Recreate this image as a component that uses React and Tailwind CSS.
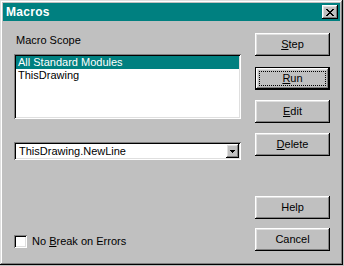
const raised =
  'shadow-[inset_-1px_-1px_0_#000,inset_1px_1px_0_#fff,inset_-2px_-2px_0_#808080,inset_2px_2px_0_#dfdfdf]';
const sunken =
  'shadow-[inset_1px_1px_0_#808080,inset_-1px_-1px_0_#fff,inset_2px_2px_0_#000,inset_-2px_-2px_0_#dfdfdf]';

function Btn({ children, isDefault, className = '' }) {
  if (isDefault) {
    return (
      <div className={`w-[75px] h-[23px] border border-black bg-[#c0c0c0] ${className}`}>
        <div className={`w-full h-full p-[3px] ${raised}`}>
          <div className="w-full h-full border border-dotted border-black flex items-center justify-center">
            {children}
          </div>
        </div>
      </div>
    );
  }
  return (
    <div className={`w-[75px] h-[23px] bg-[#c0c0c0] flex items-center justify-center ${raised} ${className}`}>
      {children}
    </div>
  );
}

export default function App() {
  return (
    <div className="w-[344px] h-[266px] bg-[#c0c0c0] font-['Liberation_Sans',Arial,sans-serif] text-[11px] leading-[13px] text-black">
      <div
        className={`w-[343px] h-[265px] p-[3px] flex flex-col shadow-[inset_-1px_-1px_0_#000,inset_1px_1px_0_#dfdfdf,inset_-2px_-2px_0_#808080,inset_2px_2px_0_#fff]`}
      >
        {/* title bar */}
        <div className="h-[18px] bg-[#008080] flex items-center pl-[3px] pr-[2px]">
          <span className="text-white font-bold text-[12px] tracking-[0.3px]">Macros</span>
          <div className={`ml-auto w-[16px] h-[14px] bg-[#c0c0c0] flex items-center justify-center ${raised}`}>
            <svg width="8" height="7" viewBox="0 0 8 7" shapeRendering="crispEdges">
              <path
                d="M0 0h2v1h1v1h2V1h1V0h2v1H7v1H6v1H5v1h1v1h1v1h1v1H6V6H5V5H3v1H2v1H0V6h1V5h1V4h1V3H2V2H1V1H0z"
                fill="#000"
              />
            </svg>
          </div>
        </div>

        {/* body */}
        <div className="flex-1 flex">
          <div className="w-[227px] ml-[11px] flex flex-col">
            <div className="mt-[13px] pl-[2px]">Macro Scope</div>
            <div className={`mt-[7px] h-[65px] bg-white p-[2px] ${sunken}`}>
              <div className="h-[13px] bg-[#008080] text-white pl-[2px]">All Standard Modules</div>
              <div className="h-[13px] pl-[2px]">ThisDrawing</div>
            </div>
            <div className={`mt-[23px] h-[18px] bg-white p-[2px] flex items-center ${sunken}`}>
              <span className="pl-[3px] flex-1">ThisDrawing.NewLine</span>
              <div className={`w-[13px] h-[14px] bg-[#c0c0c0] flex items-center justify-center ${raised}`}>
                <svg width="5" height="3" viewBox="0 0 5 3" shapeRendering="crispEdges">
                  <path d="M0 0h5v1H4v1H3v1H2V2H1V1H0z" fill="#000" />
                </svg>
              </div>
            </div>
            <div className="mt-[75px] flex items-center h-[13px]">
              <div className={`w-[13px] h-[13px] bg-white ${sunken}`} />
              <span className="ml-[5px]">
                No <span className="underline">B</span>reak on Errors
              </span>
            </div>
          </div>

          <div className="ml-auto mr-[10px] flex flex-col">
            <Btn className="mt-[12px]">
              <span>
                <span className="underline">S</span>tep
              </span>
            </Btn>
            <Btn isDefault className="mt-[11px]">
              <span>
                <span className="underline">R</span>un
              </span>
            </Btn>
            <Btn className="mt-[10px]">
              <span>
                <span className="underline">E</span>dit
              </span>
            </Btn>
            <Btn className="mt-[10px]">
              <span>
                <span className="underline">D</span>elete
              </span>
            </Btn>
            <Btn className="mt-[40px]">Help</Btn>
            <Btn className="mt-[9px]">Cancel</Btn>
          </div>
        </div>
      </div>
    </div>
  );
}
